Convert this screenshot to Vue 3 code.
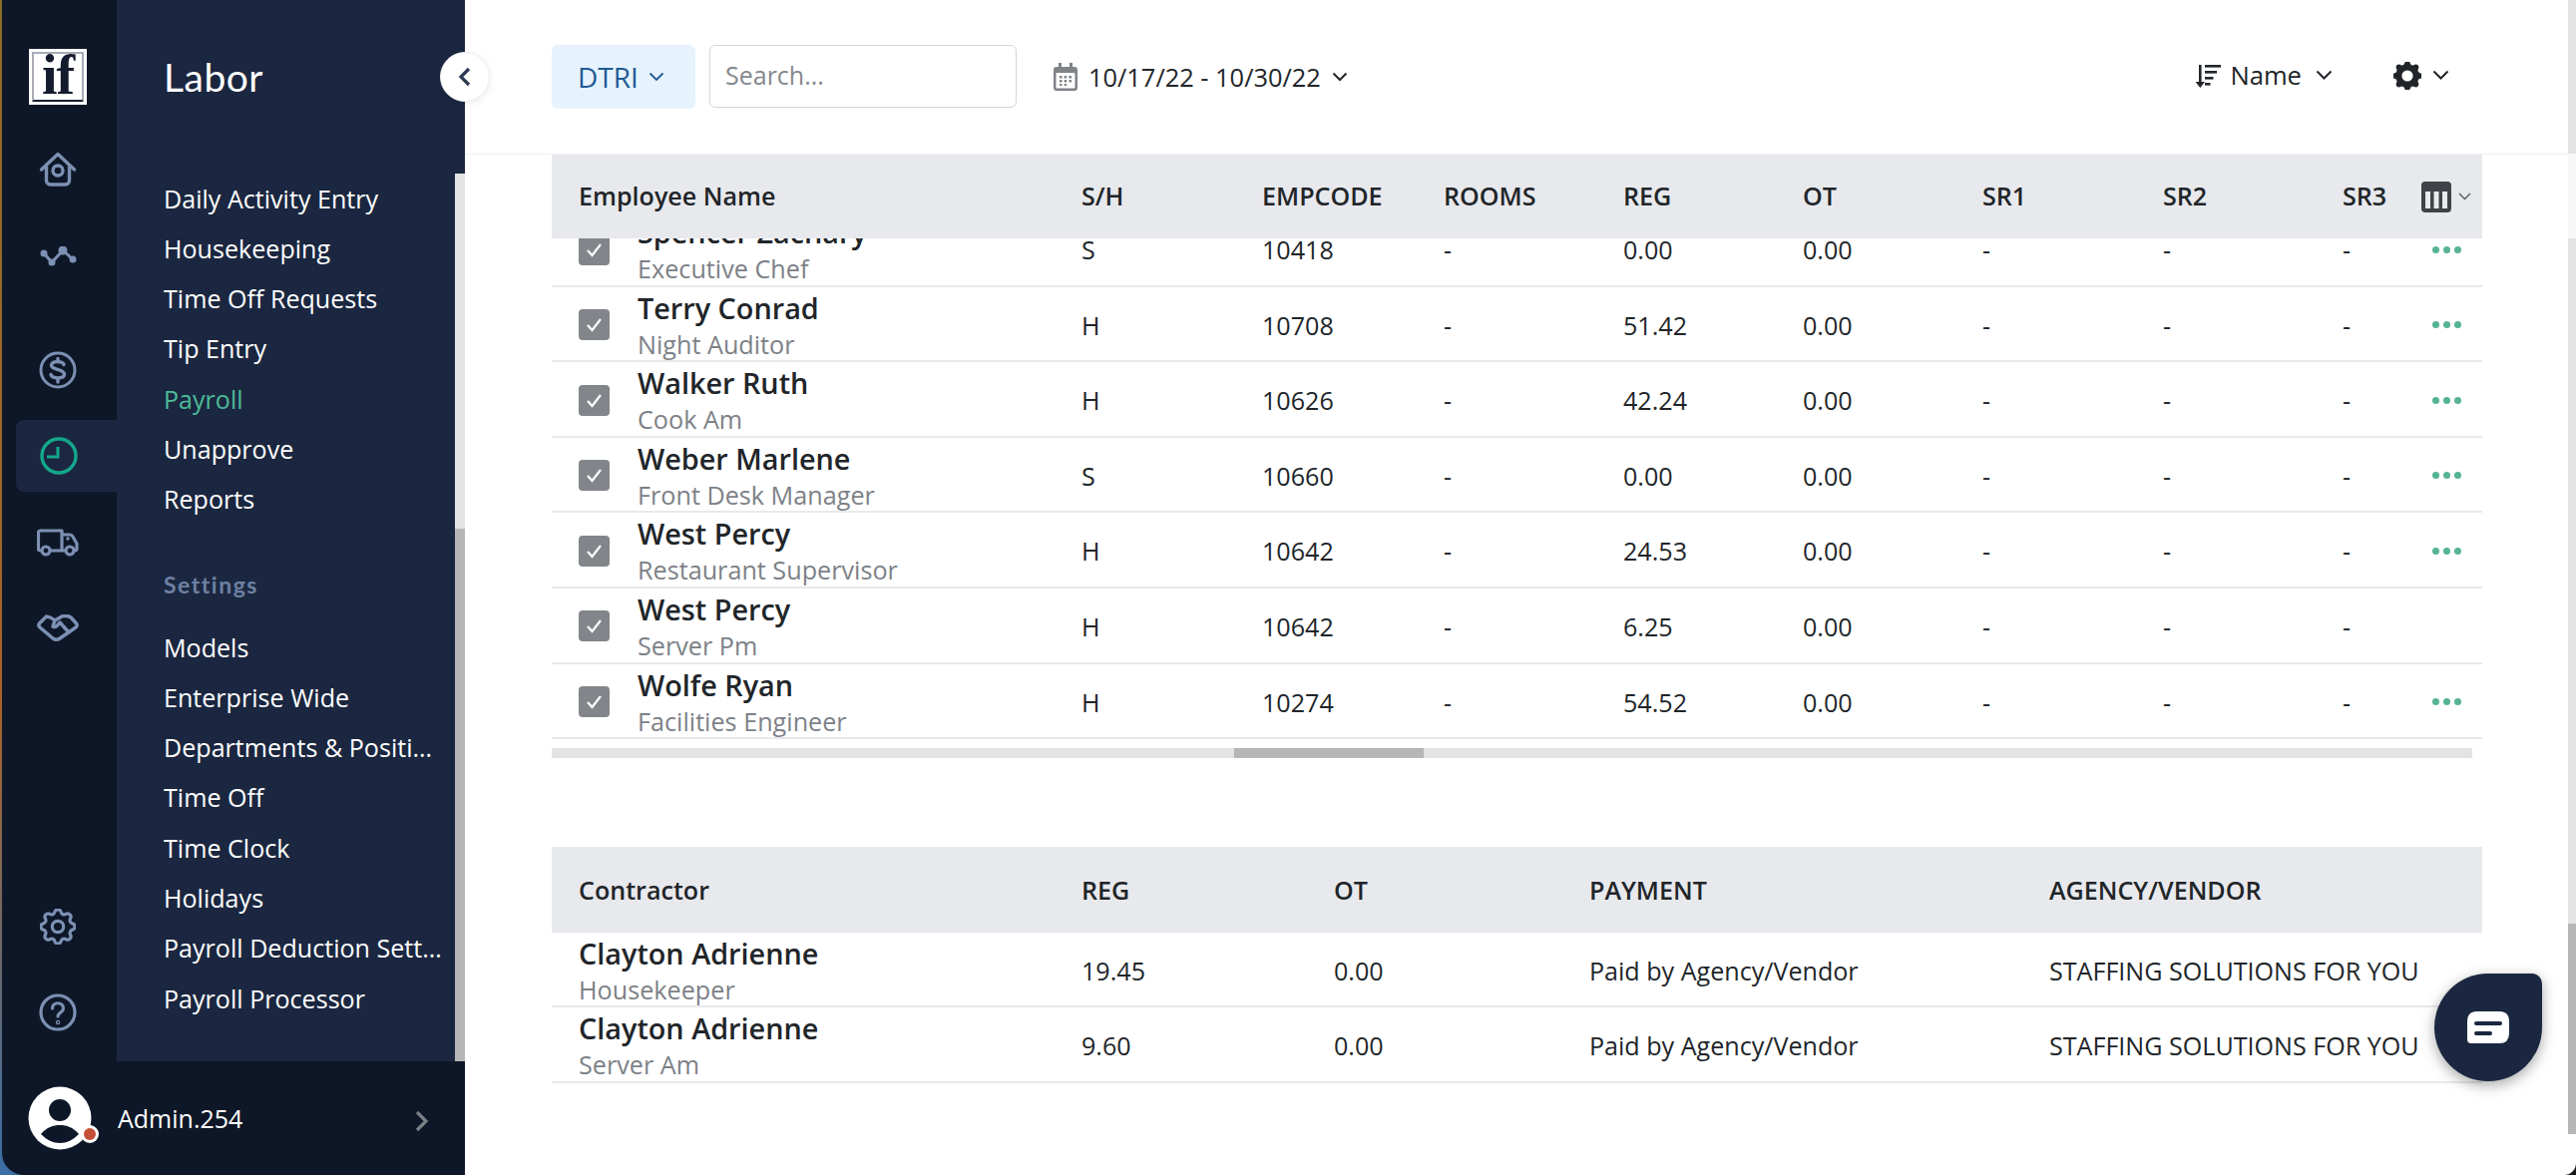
<template>
  <div class="window">
    <aside class="sidebar">
      <div class="side-top">
        <!-- Icon rail -->
        <nav class="rail">
          <div class="logo"><div class="logo-inner"><span>if</span></div></div>
          <div class="rail-item">
            <svg width="38" height="36" viewBox="0 0 38 36" fill="none" stroke="#7c90b3" stroke-width="3.4" stroke-linejoin="round" stroke-linecap="round"><path d="M2.5 18 19 2.5 35.500 18"/><path d="M7.500 15v14a4 4 0 0 0 4 4h15a4 4 0 0 0 4-4V15"/><circle cx="19" cy="19" r="5"/></svg>
          </div>
          <div class="rail-item rail-gap">
            <svg width="38" height="20" viewBox="0 0 38 20" fill="#7c90b3" stroke="#7c90b3" stroke-width="3"><path d="M5 7l8 9L24 4l10 9" fill="none"/><circle cx="5" cy="7" r="2"/><circle cx="13" cy="16" r="2"/><circle cx="24" cy="4" r="3"/><circle cx="34" cy="13" r="2"/></svg>
          </div>
          <div class="rail-item">
            <svg width="38" height="38" viewBox="0 0 38 38" fill="none" stroke="#7c90b3" stroke-width="3" stroke-linecap="round"><circle cx="19" cy="19" r="17"/><path stroke-width="3.400" d="M25 13.500c-1-3.500-12-4.500-12.500.7-.4 5 13 3.300 13 9.300-.5 4.500-12.300 4.500-13.500 0"/><path stroke-width="3.400" d="M19 7.500v3M19 28v3"/></svg>
          </div>
          <div class="rail-item active">
            <svg width="38" height="38" viewBox="0 0 38 38" fill="none" stroke="#14a88b" stroke-width="3.400"><circle cx="19" cy="19" r="17"/><path stroke-width="3" d="M18 10v10H7"/></svg>
          </div>
          <div class="rail-item">
            <svg width="42" height="28" viewBox="0 0 42 28" fill="none" stroke="#7c90b3" stroke-width="3.200" stroke-linejoin="round"><path d="M5 22H3.500Q1.500 22 1.500 20V4Q1.500 2 3.500 2H25V22H13"/><path d="M25 6h8q2 0 3 2l4 7v5q0 2-2 2h-1M29 22h-4"/><circle cx="9" cy="22" r="4"/><circle cx="33" cy="22" r="4"/><circle cx="31" cy="10" r="1" fill="#7c90b3" stroke-width="1.500"/></svg>
          </div>
          <div class="rail-item">
            <svg width="42" height="28" viewBox="0 0 42 28" fill="none" stroke="#7c90b3" stroke-width="3.500" stroke-linejoin="round" stroke-linecap="round"><path d="M9.500 2 2.500 9Q1 11 3 13l13 11q3.500 2.500 7 0l16-11q2-2 .5-4L34 3q-3-2-8-1.500L18 6q-4-3.500-8.500-4z"/><path d="M18 6l-2 6q3 2 7-4l8.500 9.500"/></svg>
          </div>
          <div class="rail-bottom">
            <div class="rail-item">
              <svg width="36" height="36" viewBox="2.500 2.500 19 19" fill="none" stroke="#7c90b3" stroke-width="1.700"><path d="M10.325 4.317c.426-1.756 2.924-1.756 3.35 0a1.724 1.724 0 002.573 1.066c1.543-.94 3.31.826 2.37 2.37a1.724 1.724 0 001.065 2.572c1.756.426 1.756 2.924 0 3.35a1.724 1.724 0 00-1.066 2.573c.94 1.543-.826 3.31-2.37 2.37a1.724 1.724 0 00-2.572 1.065c-.426 1.756-2.924 1.756-3.35 0a1.724 1.724 0 00-2.573-1.066c-1.543.94-3.31-.826-2.37-2.37a1.724 1.724 0 00-1.065-2.572c-1.756-.426-1.756-2.924 0-3.35a1.724 1.724 0 001.066-2.573c-.94-1.543.826-3.31 2.37-2.37.996.608 2.296.07 2.572-1.065z"/><circle cx="12" cy="12" r="3"/></svg>
            </div>
            <div class="rail-item">
              <svg width="38" height="38" viewBox="0 0 38 38" fill="none" stroke="#7c90b3" stroke-width="3.200" stroke-linecap="round"><circle cx="19" cy="19" r="17"/><path d="M13.500 15c0-7 11-7 11 0 0 4-5.500 4-5.500 8"/><circle cx="19" cy="29" r=".6"/></svg>
            </div>
          </div>
        </nav>

        <!-- Labor menu -->
        <div class="panel">
          <h1 class="panel-title">Labor</h1>
          <div class="panel-scroll">
            <div class="menu">
              <a v-for="item in laborMenu" :key="item" class="menu-item" :class="{ current: item === 'Payroll' }">{{ item }}</a>
              <div class="menu-head">Settings</div>
              <a v-for="item in settingsMenu" :key="item" class="menu-item">{{ item }}</a>
            </div>
            <div class="panel-bar"><div class="panel-thumb"></div></div>
          </div>
        </div>
      </div>

      <div class="user-bar">
        <div class="avatar">
          <svg width="72" height="64" viewBox="0 0 72 64">
            <circle cx="32" cy="32" r="31.500" fill="#fff"/>
            <circle cx="32" cy="24" r="11" fill="#0e1727"/>
            <path d="M13 48c6-7 12-9 19-9s13 2 19 9c-6 6-12 9-19 9s-13-3-19-9z" fill="#0e1727"/>
            <circle cx="62" cy="48" r="9" fill="#fff"/>
            <circle cx="62" cy="48" r="6" fill="#c64f37"/>
          </svg>
        </div>
        <span class="user-name">Admin.254</span>
        <svg class="user-arrow" width="14" height="22" viewBox="0 0 14 22" fill="none" stroke="#7b7f88" stroke-width="3.200"><path d="M2 2l9 9-9 9"/></svg>
      </div>
    </aside>

    <button class="collapse">
      <svg width="14" height="20" viewBox="0 0 14 20" fill="none" stroke="#2c3952" stroke-width="3.200"><path d="M11 2 3 10l8 8"/></svg>
    </button>

    <main class="main">
      <div class="content">
        <div class="toolbar">
          <div class="dtri">DTRI
            <svg width="16" height="10" viewBox="0 0 16 10" fill="none" stroke="#1f5a94" stroke-width="1.800"><path d="M1.500 1.500 8 8l6.500-6.500"/></svg>
          </div>
          <div class="search">Search...</div>
          <div class="dates">
            <svg width="24" height="28" viewBox="0 0 24 28"><path d="M5 0h3v4H16V0h3v4h2q3 0 3 3v18q0 3-3 3H3q-3 0-3-3V7q0-3 3-3h2z" fill="#7e8388"/><rect x="2.500" y="10" width="19" height="15.500" rx="1" fill="#fff"/><g fill="#7e8388"><rect x="6" y="13" width="2.500" height="2.500"/><rect x="10.700" y="13" width="2.500" height="2.500"/><rect x="15.500" y="13" width="2.500" height="2.500"/><rect x="6" y="17" width="2.500" height="2.500"/><rect x="10.700" y="17" width="2.500" height="2.500"/><rect x="15.500" y="17" width="2.500" height="2.500"/><rect x="6" y="21" width="2.500" height="2"/><rect x="10.700" y="21" width="2.500" height="2"/></g></svg>
            <span>10/17/22 - 10/30/22</span>
            <svg width="16" height="10" viewBox="0 0 16 10" fill="none" stroke="#212529" stroke-width="2"><path d="M1.500 1.500 8 8l6.500-6.500"/></svg>
          </div>
          <div class="tools">
            <div class="tool sort">
              <svg width="26" height="24" viewBox="0 0 26 24" fill="#212529"><path d="M4 1h2.600v17H10l-4.700 6L.6 18H4z"/><rect x="10" y="1" width="16" height="2.600"/><rect x="10" y="7" width="12" height="2.600"/><rect x="10" y="13" width="8.500" height="2.600"/><rect x="10" y="19" width="5.500" height="2.600"/></svg>
              <span>Name</span>
              <svg width="17" height="11" viewBox="0 0 17 11" fill="none" stroke="#212529" stroke-width="2"><path d="M1.500 1.500 8.500 8.500l7-7"/></svg>
            </div>
            <div class="tool cog">
              <svg width="28" height="28" viewBox="2.500 2.500 15 15" fill="#212529"><path fill-rule="evenodd" d="M11.490 3.170c-.38-1.560-2.600-1.560-2.980 0a1.532 1.532 0 01-2.286.948c-1.372-.836-2.942.734-2.106 2.106.54.886.061 2.042-.947 2.287-1.561.379-1.561 2.600 0 2.978a1.532 1.532 0 01.947 2.287c-.836 1.372.734 2.942 2.106 2.106a1.532 1.532 0 012.287.947c.379 1.561 2.600 1.561 2.978 0a1.533 1.533 0 012.287-.947c1.372.836 2.942-.734 2.106-2.106a1.533 1.533 0 01.947-2.287c1.561-.379 1.561-2.600 0-2.978a1.532 1.532 0 01-.947-2.287c.836-1.372-.734-2.942-2.106-2.106a1.532 1.532 0 01-2.287-.947zM10 13a3 3 0 100-6 3 3 0 000 6z"/></svg>
              <svg width="17" height="11" viewBox="0 0 17 11" fill="none" stroke="#212529" stroke-width="2"><path d="M1.500 1.500 8.500 8.500l7-7"/></svg>
            </div>
          </div>
        </div>

        <!-- Employees -->
        <section class="table employees">
          <div class="row head">
            <div v-for="col in employeeCols" :key="col" class="cell">{{ col }}</div>
            <div class="cell columns-btn">
              <svg width="30" height="31" viewBox="0 0 30 31"><rect width="30" height="31" rx="4" fill="#3f4347"/><g fill="#e8e9ec"><rect x="4" y="10" width="5" height="17"/><rect x="12.500" y="10" width="5" height="17"/><rect x="21" y="10" width="5" height="17"/></g></svg>
              <svg width="13" height="8" viewBox="0 0 13 8" fill="none" stroke="#55595e" stroke-width="1.400"><path d="M1 1l5.500 5.500L12 1"/></svg>
            </div>
          </div>
          <div class="body">
            <div class="rows">
              <div v-for="(emp, i) in employees" :key="i" class="row item">
                <div class="cell person">
                  <span class="check">
                    <svg width="17" height="15" viewBox="0 0 17 15" fill="none" stroke="#fff" stroke-width="2.200"><path d="M2 8l4.500 5L15 2"/></svg>
                  </span>
                  <div class="who">
                    <div class="name">{{ emp.name }}</div>
                    <div class="role">{{ emp.role }}</div>
                  </div>
                </div>
                <div class="cell">{{ emp.type }}</div>
                <div class="cell">{{ emp.code }}</div>
                <div class="cell">-</div>
                <div class="cell">{{ emp.reg }}</div>
                <div class="cell">0.00</div>
                <div class="cell">-</div>
                <div class="cell">-</div>
                <div class="cell">-</div>
                <div class="cell more">
                  <span v-if="emp.more" class="dots"><i></i><i></i><i></i></span>
                </div>
              </div>
            </div>
          </div>
          <div class="hbar"><div class="hthumb"></div></div>
        </section>

        <!-- Contractors -->
        <section class="table contractors">
          <div class="row head">
            <div v-for="col in contractorCols" :key="col" class="cell">{{ col }}</div>
          </div>
          <div v-for="(c, i) in contractors" :key="i" class="row item">
            <div class="cell">
              <div class="who">
                <div class="name">{{ c.name }}</div>
                <div class="role">{{ c.role }}</div>
              </div>
            </div>
            <div class="cell">{{ c.reg }}</div>
            <div class="cell">0.00</div>
            <div class="cell">Paid by Agency/Vendor</div>
            <div class="cell nowrap">STAFFING SOLUTIONS FOR YOU</div>
          </div>
        </section>
      </div>

      <div class="page-bar">
        <div class="pb-top"></div>
        <div class="pb-gap"></div>
        <div class="pb-mid"></div>
        <div class="pb-thumb"></div>
      </div>
    </main>

    <button class="chat">
      <svg width="42" height="32" viewBox="0 0 42 32"><path d="M10 0h22q10 0 10 10v12q0 10-10 10H4q-4 0-4-4V10Q0 0 10 0z" fill="#fff"/><rect x="7" y="10" width="28" height="4" rx="2" fill="#1b2740"/><rect x="7" y="20" width="18" height="4" rx="2" fill="#1b2740"/></svg>
    </button>
  </div>
</template>

<script setup>
const laborMenu = ['Daily Activity Entry', 'Housekeeping', 'Time Off Requests', 'Tip Entry', 'Payroll', 'Unapprove', 'Reports']
const settingsMenu = ['Models', 'Enterprise Wide', 'Departments & Positions', 'Time Off', 'Time Clock', 'Holidays', 'Payroll Deduction Settings', 'Payroll Processor']

const employeeCols = ['Employee Name', 'S/H', 'EMPCODE', 'ROOMS', 'REG', 'OT', 'SR1', 'SR2', 'SR3']
const contractorCols = ['Contractor', 'REG', 'OT', 'PAYMENT', 'AGENCY/VENDOR']

const employees = [
  { name: 'Spencer Zachary', role: 'Executive Chef', type: 'S', code: '10418', reg: '0.00', more: true },
  { name: 'Terry Conrad', role: 'Night Auditor', type: 'H', code: '10708', reg: '51.42', more: true },
  { name: 'Walker Ruth', role: 'Cook Am', type: 'H', code: '10626', reg: '42.24', more: true },
  { name: 'Weber Marlene', role: 'Front Desk Manager', type: 'S', code: '10660', reg: '0.00', more: true },
  { name: 'West Percy', role: 'Restaurant Supervisor', type: 'H', code: '10642', reg: '24.53', more: true },
  { name: 'West Percy', role: 'Server Pm', type: 'H', code: '10642', reg: '6.25', more: false },
  { name: 'Wolfe Ryan', role: 'Facilities Engineer', type: 'H', code: '10274', reg: '54.52', more: true }
]

const contractors = [
  { name: 'Clayton Adrienne', role: 'Housekeeper', reg: '19.45' },
  { name: 'Clayton Adrienne', role: 'Server Am', reg: '9.60' }
]
</script>

<style>
html, body {
  margin: 0;
  background: #fff;
}
</style>

<style scoped>
.window {
  position: relative;
  display: flex;
  width: 2582px;
  height: 1178px;
  overflow: hidden;
  padding-left: 2px;
  box-sizing: border-box;
  font-family: "Open Sans", "Noto Sans", sans-serif;
  color: #212529;
  background: linear-gradient(to right, transparent 50%, #16181c 50%),
    linear-gradient(180deg, #8a6a2a 0%, #a5622a 60%, #3a6ea5 100%);
}

/* sidebar */
.sidebar {
  width: 464px;
  flex: none;
  display: flex;
  flex-direction: column;
  background: #0e1727;
  border-bottom-left-radius: 22px;
  overflow: hidden;
}
.side-top {
  display: flex;
  height: 1064px;
}
.rail {
  width: 115px;
  flex: none;
  display: flex;
  flex-direction: column;
  padding: 49px 0 0 14px;
  box-sizing: border-box;
}
.logo {
  width: 58px;
  height: 56px;
  margin: 0 0 29px 13px;
  background: #fff;
  padding: 3px;
  box-sizing: border-box;
}
.logo-inner {
  height: 46px;
  border: 2px solid #a8adb6;
  border-bottom-color: #141c2e;
  display: flex;
  justify-content: center;
  align-items: flex-end;
  font-family: "Liberation Serif", serif;
  font-weight: 700;
  font-size: 56px;
  line-height: 50px;
  letter-spacing: -1px;
  color: #141c2e;
}
.rail-item {
  height: 72px;
  margin-bottom: 14.500px;
  display: flex;
  align-items: center;
  justify-content: center;
  width: 86px;
  padding-right: 0;
  margin-left: -1px;
}
.rail-gap {
  margin-bottom: 42px;
}
.rail-item.active {
  width: 101px;
  padding-right: 15px;
  box-sizing: border-box;
  margin-left: 0;
  background: #1b2740;
  border-radius: 8px 0 0 8px;
}
.rail-bottom {
  margin-top: auto;
  padding-bottom: 0;
  margin-bottom: -1.500px;
}
.panel {
  flex: 1;
  min-width: 0;
  background: #1b2740;
  display: flex;
  flex-direction: column;
}
.panel-title {
  margin: 0;
  height: 173.500px;
  padding: 52px 0 0 47px;
  box-sizing: border-box;
  font-family: "Lato", sans-serif;
  font-size: 39px;
  line-height: 50px;
  font-weight: 400;
  letter-spacing: 0.5px;
  color: #fff;
}
.panel-scroll {
  flex: 1;
  display: flex;
  min-height: 0;
}
.menu {
  flex: 1;
  min-width: 0;
  padding-left: 47px;
}
.menu-item {
  display: block;
  height: 50.300px;
  line-height: 50.300px;
  width: 280px;
  font-size: 25.100px;
  color: #fff;
  white-space: nowrap;
  overflow: hidden;
  text-overflow: ellipsis;
}
.menu-item.current {
  color: #4cbb98;
}
.menu-head {
  margin: 45px 0 23px;
  height: 30px;
  line-height: 30px;
  font-family: "Lato", sans-serif;
  font-size: 23px;
  font-weight: 700;
  letter-spacing: 1.500px;
  color: #6d80a3;
}
.panel-bar {
  width: 10px;
  flex: none;
  background: #e3e3e3;
}
.panel-thumb {
  height: 534px;
  margin-top: 356.500px;
  background: #b6b6b6;
}
.user-bar {
  flex: 1;
  display: flex;
  align-items: center;
  padding: 0 0 0 26px;
  position: relative;
}
.avatar {
  width: 90px;
  height: 64px;
}
.user-name {
  font-size: 25px;
  color: #fff;
}
.user-arrow {
  position: absolute;
  left: 414px;
  top: 49px;
}
.collapse {
  position: absolute;
  left: 441px;
  top: 52px;
  width: 50px;
  height: 50px;
  padding: 0;
  border: 1px solid #eceef1;
  border-radius: 50%;
  background: #fff;
  box-shadow: 0 2px 8px rgba(0, 0, 0, 0.08);
  display: flex;
  align-items: center;
  justify-content: center;
  z-index: 2;
}

/* main */
.main {
  flex: 1;
  min-width: 0;
  display: flex;
  background: #fff;
  border-bottom-right-radius: 12px;
}
.content {
  flex: 1;
  min-width: 0;
}
.toolbar {
  height: 155px;
  padding-left: 87px;
  box-sizing: border-box;
  display: flex;
  align-items: center;
  border-bottom: 1px solid #eceef0;
}
.dtri {
  width: 144px;
  height: 64px;
  margin-top: -1px;
  padding-left: 26px;
  box-sizing: border-box;
  background: #e6f3fd;
  border-radius: 6px;
  color: #1f5a94;
  font-size: 28px;
  display: flex;
  align-items: center;
  gap: 10px;
}
.search {
  width: 308px;
  height: 63px;
  margin-left: 14px;
  margin-top: -1px;
  padding-left: 15px;
  box-sizing: border-box;
  border: 1.500px solid #d3d5d9;
  border-radius: 6px;
  color: #85888c;
  font-size: 25px;
  line-height: 58px;
}
.dates {
  margin-left: 37px;
  display: flex;
  align-items: center;
  font-size: 25.400px;
  font-weight: 500;
}
.dates span {
  margin: 0 11px 0 11px;
}
.tools {
  margin-left: auto;
  display: flex;
  align-items: center;
  padding-right: 119px;
  margin-top: -3px;
}
.tool {
  display: flex;
  align-items: center;
}
.sort {
  font-size: 25.600px;
  font-weight: 500;
}
.sort span {
  margin: 0 14px 0 9px;
}
.cog {
  margin-left: 61px;
  gap: 11px;
}

/* tables */
.table {
  margin-left: 87px;
  width: 1935px;
}
.row {
  display: grid;
  align-items: stretch;
}
.employees .row {
  grid-template-columns: 504px 181px 182px 180px 180px 180px 181px 180px 104px 63px;
}
.contractors .row {
  grid-template-columns: 504px 253px 256px 461px 461px;
}
.cell {
  display: flex;
  align-items: center;
  padding-left: 27px;
  font-size: 25.100px;
  min-width: 0;
}
.head {
  height: 84px;
  background: #e8e9ed;
}
.head .cell {
  font-weight: 600;
  padding-bottom: 3px;
}
.contractors .head {
  height: 86px;
}
.contractors .head .cell {
  padding-bottom: 0;
}
.item {
  height: 75.600px;
  box-sizing: border-box;
  border-bottom: 2px solid #e8e9eb;
}
.item .cell {
  padding-bottom: 3px;
}
.body {
  height: 502.500px;
  overflow: hidden;
}
.rows {
  margin-top: -27px;
}
.person {
  gap: 28px;
}
.who {
  padding-top: 3px;
}
.check {
  width: 31px;
  height: 31px;
  flex: none;
  border-radius: 4px;
  background: #82858a;
  display: flex;
  align-items: center;
  justify-content: center;
}
.name {
  font-size: 28.800px;
  font-weight: 600;
  line-height: 36px;
  color: #212529;
  white-space: nowrap;
}
.role {
  font-size: 25.200px;
  line-height: 37px;
  color: #7d8187;
  white-space: nowrap;
}
.columns-btn {
  padding-left: 4px;
  gap: 7px;
  margin-left: -2px;
  padding-bottom: 0 !important;
}
.more {
  padding-left: 13px;
}
.dots {
  display: flex;
  gap: 4px;
}
.dots i {
  width: 7px;
  height: 7px;
  border-radius: 50%;
  background: #55b391;
}
.hbar {
  width: 1925px;
  height: 10px;
  margin-top: 8px;
  background: #e3e3e3;
}
.hthumb {
  width: 190px;
  height: 10px;
  margin-left: 684px;
  background: #b6b6b6;
}
.contractors {
  margin-top: 89px;
}
.nowrap {
  white-space: nowrap;
}

/* page scrollbar */
.page-bar {
  width: 8px;
  flex: none;
  display: flex;
  flex-direction: column;
}
.pb-top {
  height: 154px;
  background: #e3e3e3;
}
.pb-gap {
  height: 85px;
  background: #f7f7f7;
}
.pb-mid {
  height: 687px;
  background: #e3e3e3;
}
.pb-thumb {
  height: 211px;
  background: #b6b6b6;
}

.chat {
  position: absolute;
  left: 2440px;
  top: 976px;
  width: 108px;
  height: 108px;
  padding: 0;
  border: none;
  border-radius: 50% 10px 50% 50%;
  background: #1b2740;
  box-shadow: 0 4px 14px rgba(0, 0, 0, 0.35);
  display: flex;
  align-items: center;
  justify-content: center;
}
</style>
